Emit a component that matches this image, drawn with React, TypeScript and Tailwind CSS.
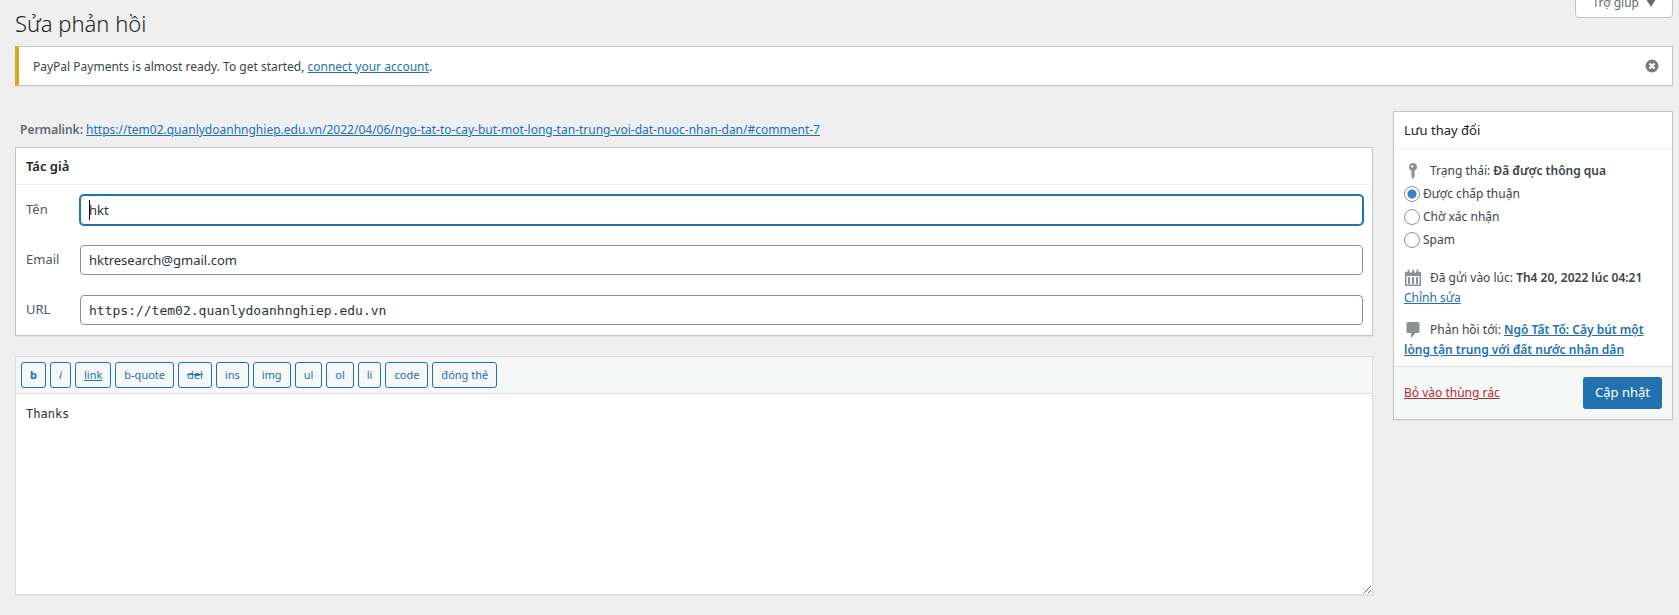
import * as React from "react"

const quickTags = [
    { label: "b", style: "font-bold" },
    { label: "i", style: "italic" },
    { label: "link", style: "underline" },
    { label: "b-quote", style: "" },
    { label: "del", style: "line-through" },
    { label: "ins", style: "" },
    { label: "img", style: "" },
    { label: "ul", style: "" },
    { label: "ol", style: "" },
    { label: "li", style: "" },
    { label: "code", style: "" },
    { label: "đóng thẻ", style: "" },
];

const statuses = ["Được chấp thuận", "Chờ xác nhận", "Spam"];

const inputStyle = "h-[30px] w-full rounded-[4px] border border-[#8c8f94] bg-white px-2 text-[13px] text-[#2c3338] outline-none";

function PinIcon() {
    return (
        <svg className="h-5 w-[18px] shrink-0" viewBox="1 0 18 20" fill="#8c8f94" aria-hidden="true">
            <path fillRule="evenodd" d="M10 2a4 4 0 0 1 1.500 7.700V16L10 18l-1.500-2V9.700A4 4 0 0 1 10 2zm-1 2.200a1.200 1.200 0 1 0 0 2.400 1.200 1.200 0 0 0 0-2.400z" />
        </svg>
    );
}

function CalendarIcon() {
    return (
        <svg className="h-5 w-[18px] shrink-0" viewBox="1 0 18 20" fill="#8c8f94" aria-hidden="true">
            <path fillRule="evenodd" d="M2 4h16v14H2zM3.500 8v8.500h13V8z" />
            <path d="M4.500 2.500a1 1 0 0 1 2 0V5h-2zM9 2.500a1 1 0 0 1 2 0V5H9zM13.500 2.500a1 1 0 0 1 2 0V5h-2zM5 9h2v7H5zM9 9h2v7H9zM13 9h2v7h-2z" />
            <path d="M7.300 3.500h1v1.500h-1zM11.800 3.500h1v1.500h-1z" fill="#fff" />
        </svg>
    );
}

function CommentIcon() {
    return (
        <svg className="h-5 w-[18px] shrink-0" viewBox="1 0 18 20" fill="#8c8f94" aria-hidden="true">
            <path d="M5 2h10a1.500 1.500 0 0 1 1.500 1.500v8A1.500 1.500 0 0 1 15 13h-2.500L8 18v-5H5a1.500 1.500 0 0 1-1.500-1.500v-8A1.500 1.500 0 0 1 5 2z" />
        </svg>
    );
}

function AuthorBox() {
    return (
        <section className="border border-[#c3c4c7] bg-white shadow-[0_1px_1px_rgba(0,0,0,0.04)]">
            <h2 className="border-b border-[#f0f0f1] px-[10px] text-[13px] leading-9 font-semibold text-[#1d2327]">Tác giả</h2>
            <div className="grid grid-cols-[54px_1fr] items-center gap-y-5 py-[10px] pr-[9px] pl-[10px] text-[13px] text-[#50575e]">
                <label htmlFor="name">Tên</label>
                <div className="relative">
                    <input id="name" type="text" defaultValue="hkt" className="block h-[30px] w-full rounded-[4px] border border-[#2271b1] bg-white px-2 text-[13px] text-[#2c3338] shadow-[0_0_0_1px_#2271b1] outline-none" />
                    <span className="absolute top-[5px] left-[9px] h-5 w-px bg-black" />
                </div>
                <label htmlFor="email">Email</label>
                <input id="email" type="text" defaultValue="hktresearch@gmail.com" className={inputStyle} />
                <label htmlFor="url">URL</label>
                <input id="url" type="text" defaultValue="https://tem02.quanlydoanhnghiep.edu.vn" className={inputStyle + " font-['DejaVu_Sans_Mono',monospace]"} />
            </div>
        </section>
    );
}

function Editor() {
    return (
        <section className="mt-5 border border-[#dcdcde] bg-white shadow-[0_1px_1px_rgba(0,0,0,0.04)]">
            <div className="flex gap-1 border-b border-[#dcdcde] bg-[#f6f7f7] p-[5px]">
                {quickTags.map((tag) => (
                    <button key={tag.label} type="button" className={"h-[26px] min-w-[21px] rounded-[3px] border border-[#2271b1] bg-[#f6f7f7] px-2 text-[11px] text-[#2271b1] " + tag.style}>
                        {tag.label}
                    </button>
                ))}
            </div>
            <textarea aria-label="Phản hồi" defaultValue="Thanks" className="block h-[200px] w-full resize-y p-[10px] font-['DejaVu_Sans_Mono',monospace] text-[12px] leading-5 text-[#2c3338] outline-none" />
        </section>
    );
}

function SaveBox() {
    return (
        <aside className="w-[280px] shrink-0 border border-[#c3c4c7] bg-white shadow-[0_1px_1px_rgba(0,0,0,0.04)]">
            <h2 className="border-b border-[#f0f0f1] px-[10px] text-[13px] leading-9 text-[#1d2327]">Lưu thay đổi</h2>
            <div className="px-[10px] pt-3 pb-[6px] leading-5">
                <div className="flex gap-2">
                    <PinIcon />
                    <p>Trạng thái: <b className="font-semibold">Đã được thông qua</b></p>
                </div>
                <fieldset className="mt-px">
                    {statuses.map((status, i) => (
                        <label key={status} className="flex h-[23px] items-center gap-[3px]">
                            <input type="radio" name="status" defaultChecked={i === 0} className="h-4 w-4 appearance-none rounded-full border border-[#8c8f94] bg-white checked:bg-[radial-gradient(circle,#3582c4_4px,#fff_5px)]" />
                            {status}
                        </label>
                    ))}
                </fieldset>
                <div className="mt-[17px] flex gap-2">
                    <CalendarIcon />
                    <p>Đã gửi vào lúc: <b className="font-semibold">Th4 20, 2022 lúc 04:21</b></p>
                </div>
                <a href="#edit" className="text-[#2271b1] underline">Chỉnh sửa</a>
                <div className="mt-3">
                    <span className="mr-2 inline-block align-top"><CommentIcon /></span>
                    Phản hồi tới: <a href="#post" className="font-semibold text-[#2271b1] underline">Ngô Tất Tố: Cây bút một lòng tận trung với đất nước nhân dân</a>
                </div>
            </div>
            <div className="flex items-center justify-between border-t border-[#dcdcde] bg-[#f6f7f7] p-[10px]">
                <a href="#trash" className="text-[#b32d2e] underline">Bỏ vào thùng rác</a>
                <button type="submit" className="h-8 rounded-[3px] bg-[#2271b1] px-3 text-[13px] text-white">Cập nhật</button>
            </div>
        </aside>
    );
}

export default function App() {
    return (
        <div className="relative min-h-screen bg-[#efefef] pr-[6px] pl-[15px] font-['Noto_Sans','Open_Sans',sans-serif] text-[12px] text-[#3c434a]">
            {/* help tab hangs from the top edge */}
            <button type="button" className="absolute top-[-12px] right-[6px] flex h-[30px] items-center gap-[7px] rounded-b-[4px] border border-[#c3c4c7] bg-white px-4 text-[12px] text-[#646970]">
                Trợ giúp
                <svg className="h-2 w-[10px]" viewBox="0 0 10 8" fill="#646970" aria-hidden="true"><path d="M0 0h10L5 8z" /></svg>
            </button>

            <h1 className="h-[46px] text-[22px] leading-[46px] font-light text-[#1d2327]">Sửa phản hồi</h1>

            <div className="flex h-10 items-center justify-between border border-l-4 border-[#c3c4c7] border-l-[#dba617] bg-white pr-[13px] pl-[14px] shadow-[0_1px_1px_rgba(0,0,0,0.04)]">
                <p className="pt-px">PayPal Payments is almost ready. To get started, <a href="#connect" className="text-[#2271b1] underline">connect your account</a>.</p>
                <button type="button" aria-label="Dismiss">
                    <svg className="h-[14px] w-[14px]" viewBox="0 0 14 14" aria-hidden="true">
                        <circle cx="7" cy="7" r="6.500" fill="#787c82" />
                        <path d="M4.500 4.500l5 5M9.500 4.500l-5 5" stroke="#fff" strokeWidth="2.200" />
                    </svg>
                </button>
            </div>

            <div className="mt-[25px] flex items-start gap-5">
                <main className="min-w-0 flex-1">
                    <p className="h-9 px-[5px] pt-px leading-9 text-[#646970]">
                        <b className="font-semibold">Permalink:</b>{" "}
                        <a href="#comment-7" className="text-[#2271b1] underline">https://tem02.quanlydoanhnghiep.edu.vn/2022/04/06/ngo-tat-to-cay-but-mot-long-tan-trung-voi-dat-nuoc-nhan-dan/#comment-7</a>
                    </p>
                    <AuthorBox />
                    <Editor />
                </main>
                <SaveBox />
            </div>
        </div>
    );
}
